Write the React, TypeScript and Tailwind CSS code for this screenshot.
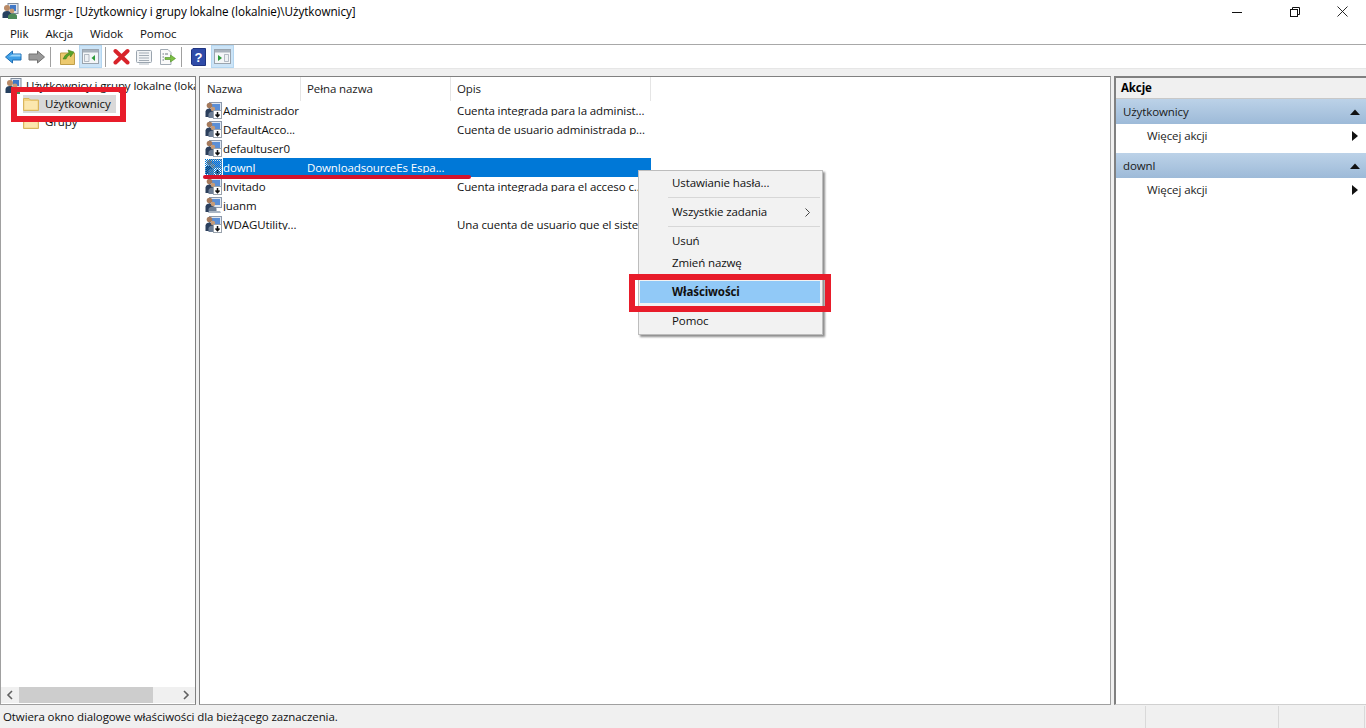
import React from "react";

const font = { fontFamily: '"Open Sans","Noto Sans",sans-serif' };

function UserIcon({ arrow = true, selected = false }: { arrow?: boolean; selected?: boolean }) {
  return (
    <svg width="17" height="17" viewBox="0 0 17 17" className="shrink-0">
      <defs>
        <pattern id="dith" width="2" height="2" patternUnits="userSpaceOnUse">
          <rect width="1" height="1" fill="#0078d7" />
          <rect x="1" y="1" width="1" height="1" fill="#0078d7" />
        </pattern>
      </defs>
      <rect x="4.5" y="0.5" width="12" height="10" fill="#dfe6f0" stroke="#8c99ab" />
      <rect x="7" y="2" width="8" height="6" fill="#5b8fd6" />
      <circle cx="4.5" cy="3.5" r="2.8" fill="#a57a5c" />
      <path d="M0.5 15 V9.5 Q1 6.5 4.5 6.5 Q8 6.5 8.5 9.5 V15 Z" fill="#2b3f5c" />
      <circle cx="8" cy="7" r="2.2" fill="#c79b76" />
      <path d="M3.5 16 V12 Q4.5 9.5 8 9.5 Q11.5 9.5 11.5 12 V16 Z" fill="#6e7f96" />
      {arrow ? (
        <>
          <rect x="8.5" y="8.5" width="8" height="8" fill="#fff" stroke="#9aa3ad" />
          <path d="M12.5 10 V14.5 M10.5 12.5 L12.5 14.7 L14.5 12.5" stroke="#111" strokeWidth="1.5" fill="none" />
        </>
      ) : (
        <path d="M4 14 H15 L16 16 H4 Z" fill="#a9b5c4" />
      )}
      {selected && <rect width="17" height="17" fill="url(#dith)" />}
    </svg>
  );
}

function AppIcon() {
  return (
    <svg width="17" height="17" viewBox="0 0 17 17" className="shrink-0">
      <rect x="6" y="0.5" width="10" height="10" fill="#dfe6f0" stroke="#7f8c9d" />
      <rect x="8" y="2" width="6" height="6" fill="#3f78c8" />
      <circle cx="5" cy="5" r="3" fill="#b98a66" />
      <path d="M0.5 15 V11 Q1 8 5 8 Q9 8 9.5 11 V15 Z" fill="#26405f" />
      <circle cx="10" cy="8" r="2.4" fill="#c79b76" />
      <path d="M6 16 V13 Q7 10.5 10.5 10.5 Q15 10.5 15 13 V16 Z" fill="#4d8a58" />
    </svg>
  );
}

function Folder() {
  return (
    <svg width="16" height="14" viewBox="0 0 16 14" className="shrink-0">
      <path d="M0.5 1.5 H6 L7.5 3 H15.5 V13.5 H0.5 Z" fill="#f3d27e" stroke="#d8b55e" />
      <rect x="1.5" y="4" width="13" height="8.5" fill="#fbe7ae" />
    </svg>
  );
}

function TitleIcons() {
  return (
    <div className="flex items-center">
      <div className="w-[46px] flex justify-center">
        <svg width="10" height="10" viewBox="0 0 10 10"><path d="M0 5.5 H10" stroke="#111" /></svg>
      </div>
      <div className="w-[46px] ml-[12px] flex justify-center">
        <svg width="10" height="10" viewBox="0 0 10 10" fill="none" stroke="#111"><rect x="0.5" y="2.5" width="7" height="7" /><path d="M2.5 2.5 V0.5 H9.5 V7.5 H7.5" /></svg>
      </div>
      <div className="w-[46px] ml-[1px] mr-[1px] flex justify-center">
        <svg width="11" height="11" viewBox="0 0 11 11" stroke="#111" strokeWidth="0.9"><path d="M0.5 0.5 L10.5 10.5 M10.5 0.5 L0.5 10.5" /></svg>
      </div>
    </div>
  );
}

function Sep() {
  return <div className="w-px h-[20px] bg-[#a0a0a0]" />;
}

function Toolbar() {
  return (
    <div className="h-[23px] flex items-center bg-white">
      <div className="ml-[5px] w-[17px] flex">
        <svg width="17" height="14" viewBox="0 0 17 14"><path d="M0.5 7 L7.5 1 V4 H16 V10 H7.5 V13 Z" fill="#3f9fe6" stroke="#1f6fb5" /><path d="M7.5 4.6 H15.5 V6.6 H4 Z" fill="#9bd6fa" /></svg>
      </div>
      <div className="ml-[6px] w-[17px] flex">
        <svg width="17" height="14" viewBox="0 0 17 14"><path d="M16.5 7 L9.5 1 V4 H1 V10 H9.5 V13 Z" fill="#9a9a9a" stroke="#727272" /></svg>
      </div>
      <div className="ml-[5px]"><Sep /></div>
      <div className="ml-[9px] w-[15px]">
        <svg width="15" height="17" viewBox="0 0 15 17"><path d="M0.5 5 H14.5 V16.5 H0.5 Z" fill="#ecc96e" stroke="#bf9e49" /><path d="M3 11 Q5 6 9 5 L8 2 L14 4 L10.5 9 L10 6.5 Q7 8 6 11 Z" fill="#58a32a" stroke="#3d7a1a" strokeWidth="0.5" /></svg>
      </div>
      <div className="ml-[4px] w-[23px] h-[23px] bg-[#cce4f7] border border-[#b4d6f0] flex items-center justify-center">
        <svg width="17" height="15" viewBox="0 0 17 15"><rect x="0.5" y="0.5" width="16" height="14" fill="#f4f6f8" stroke="#9aa4ae" /><rect x="1" y="1" width="15" height="2.5" fill="#a8b2bc" /><path d="M2.5 5.5 H7 V12.5 H2.5 Z" fill="#eef1f4" stroke="#8a96a3" strokeWidth="0.6" /><path d="M13 6 L9.5 9 L13 12 Z" fill="#2d9b3a" /></svg>
      </div>
      <div className="ml-[3px]"><Sep /></div>
      <div className="ml-[7px] w-[17px]">
        <svg width="17" height="17" viewBox="0 0 17 17"><path d="M2.5 3 L14.5 14.5 M14.5 3 L2.5 14.5" stroke="#d8232a" strokeWidth="4" strokeLinecap="round" /></svg>
      </div>
      <div className="ml-[6px] w-[16px]">
        <svg width="16" height="16" viewBox="0 0 16 16" fill="none"><rect x="0.5" y="1.5" width="15" height="12" rx="1" fill="#f2f4f6" stroke="#9aa4ae" /><path d="M3 4 H13 M3 6.5 H13 M3 9 H13 M3 11.5 H13" stroke="#a3acb5" /><path d="M3 15 H13" stroke="#b4bcc4" /></svg>
      </div>
      <div className="ml-[7px] w-[17px]">
        <svg width="17" height="16" viewBox="0 0 17 16" fill="none"><path d="M1.5 0.5 H9 L12 3.5 V15.5 H1.5 Z" fill="#fafafa" stroke="#a3acb5" /><path d="M3.5 5 H5 M3.5 8 H5 M3.5 11 H5 M6 5 H9" stroke="#6d7680" /><path d="M6 8.5 H11.5 V6 L16.5 9.5 L11.5 13 V10.5 H6 Z" fill="#7cc043" stroke="#4e8f23" strokeWidth="0.6" /></svg>
      </div>
      <div className="ml-[5px]"><Sep /></div>
      <div className="ml-[9px] w-[15px]">
        <svg width="15" height="18" viewBox="0 0 15 18"><path d="M2 0.5 H14.5 V17.5 H2 L0.5 16 V2 Z" fill="#2f4ba8" stroke="#1f3380" /><text x="7.5" y="13.5" textAnchor="middle" fontSize="13" fontWeight="700" fill="#fff" fontFamily="Liberation Sans, sans-serif">?</text></svg>
      </div>
      <div className="ml-[5px] w-[23px] h-[23px] bg-[#cce4f7] border border-[#b4d6f0] flex items-center justify-center">
        <svg width="17" height="15" viewBox="0 0 17 15"><rect x="0.5" y="0.5" width="16" height="14" fill="#f4f6f8" stroke="#9aa4ae" /><rect x="1" y="1" width="15" height="2.5" fill="#a8b2bc" /><path d="M10.5 5.5 H14.5 V12.5 H10.5 Z" fill="#eef1f4" stroke="#8a96a3" strokeWidth="0.6" /><path d="M4 6 L8 9 L4 12 Z" fill="#2d9b3a" /></svg>
      </div>
    </div>
  );
}

const rows: { n: string; f?: string; o?: string; sel?: boolean; arrow?: boolean }[] = [
  { n: "Administrador", o: "Cuenta integrada para la administ..." },
  { n: "DefaultAcco...", o: "Cuenta de usuario administrada p..." },
  { n: "defaultuser0" },
  { n: "downl", f: "DownloadsourceEs Espa...", sel: true },
  { n: "Invitado", o: "Cuenta integrada para el acceso c..." },
  { n: "juanm", arrow: false },
  { n: "WDAGUtility...", o: "Una cuenta de usuario que el siste..." },
];

function ListPane() {
  return (
    <div className="relative flex-1 ml-[3px] mr-[3px] bg-white border border-[#a0a0a0] border-t-[#808080] border-l-[#808080] overflow-hidden">
      <div className="flex h-[24px] w-[451px] text-[#222] items-center">
        <div className="w-[101px] h-full pl-[7px] flex items-center border-r border-[#e5e5e5]">Nazwa</div>
        <div className="w-[150px] h-full pl-[6px] flex items-center border-r border-[#e5e5e5]">Pełna nazwa</div>
        <div className="w-[200px] h-full pl-[6px] flex items-center border-r border-[#e5e5e5]">Opis</div>
      </div>
      <div className="w-[451px]">
        {rows.map((r) => (
          <div key={r.n} className="flex h-[19px] items-center">
            <div className="w-[23px] pl-[5px] shrink-0 flex"><UserIcon arrow={r.arrow !== false} selected={r.sel} /></div>
            <div className={r.sel ? "flex flex-1 h-full items-center bg-[#0078d7] text-white" : "flex flex-1 h-full items-center text-[#111]"}>
              <div className="w-[84px] shrink-0 whitespace-nowrap overflow-hidden">{r.n}</div>
              <div className="w-[150px] shrink-0 whitespace-nowrap overflow-hidden">{r.f ?? ""}</div>
              <div className="w-[194px] shrink-0 whitespace-nowrap overflow-hidden">{r.o ?? ""}</div>
            </div>
          </div>
        ))}
      </div>
    </div>
  );
}

function TreePane() {
  return (
    <div className="w-[196px] shrink-0 flex flex-col bg-white border border-[#a0a0a0] border-t-[#808080] border-r-[#808080] overflow-hidden">
      <div className="flex-1 text-[#111]">
        <div className="h-[18px] flex items-center pl-[4px] gap-[4px] whitespace-nowrap">
          <AppIcon />
          <span>Użytkownicy i grupy lokalne (lokalnie)</span>
        </div>
        <div className="flex items-center h-[18px] ml-[22px]">
          <div className="flex items-center h-[18px] w-[93px] bg-[#d9d9d9]">
            <Folder />
            <span className="ml-[6px]">Użytkownicy</span>
          </div>
        </div>
        <div className="flex items-center h-[18px] ml-[22px]">
          <Folder />
          <span className="ml-[6px]">Grupy</span>
        </div>
      </div>
      <div className="h-[16px] mb-[1px] bg-[#f0f0f0] flex items-center">
        <div className="w-[18px] flex justify-center">
          <svg width="8" height="10" viewBox="0 0 8 10" fill="none" stroke="#606060" strokeWidth="1.6"><path d="M6 1 L2 5 L6 9" /></svg>
        </div>
        <div className="w-[134px] h-full bg-[#cdcdcd]" />
        <div className="flex-1 flex justify-end pr-[5px]">
          <svg width="8" height="10" viewBox="0 0 8 10" fill="none" stroke="#606060" strokeWidth="1.6"><path d="M2 1 L6 5 L2 9" /></svg>
        </div>
      </div>
    </div>
  );
}

function ActionGroup({ title }: { title: string }) {
  return (
    <div>
      <div className="h-[25px] bg-gradient-to-b from-[#bcd2e8] to-[#9dbad8] flex items-center pl-[7px] pr-[6px] justify-between text-[#1a1a1a]">
        <span>{title}</span>
        <svg width="10" height="6" viewBox="0 0 10 6"><path d="M0 6 L5 0.5 L10 6 Z" fill="#111" /></svg>
      </div>
      <div className="h-[29px] flex items-center pb-[5px] pl-[31px] pr-[8px] justify-between text-[#222]">
        <span>Więcej akcji</span>
        <svg width="6" height="10" viewBox="0 0 6 10"><path d="M0 0 L6 5 L0 10 Z" fill="#111" /></svg>
      </div>
    </div>
  );
}

function ActionPane() {
  return (
    <div className="w-[252px] shrink-0 bg-white border-l-2 border-l-[#808080] border-t-2 border-t-[#808080] border-b border-b-[#d0d0d0]">
      <div className="h-[21px] bg-[#f0f0f0] flex items-center pl-[5px] font-bold text-black border-b border-[#c8c8c8]">Akcje</div>
      <ActionGroup title="Użytkownicy" />
      <ActionGroup title="downl" />
    </div>
  );
}

function ContextMenu() {
  const Line = () => <div className="h-px bg-[#d7d7d7] ml-[28px] mr-[1px] my-[3px]" />;
  return (
    <div className="absolute left-[638px] top-[170px] w-[185px] h-[165px] bg-[#f2f2f2] border border-[#bdbdbd] shadow-[2px_2px_2px_rgba(0,0,0,0.45)] text-[#111] p-[1px]">
      <div className="h-[22px] flex items-center pl-[32px]">Ustawianie hasła...</div>
      <Line />
      <div className="h-[22px] flex items-center pl-[32px] pr-[11px] justify-between">
        <span>Wszystkie zadania</span>
        <svg width="5" height="9" viewBox="0 0 5 9" fill="none" stroke="#444"><path d="M0.5 0.5 L4.5 4.5 L0.5 8.5" /></svg>
      </div>
      <Line />
      <div className="h-[22px] flex items-center pl-[32px]">Usuń</div>
      <div className="h-[22px] flex items-center pl-[32px]">Zmień nazwę</div>
      <div className="h-[22px] mt-[7px] mr-[1px] flex items-center pl-[32px] bg-[#91c9f7] font-bold">Właściwości</div>
      <div className="h-[22px] mt-[7px] flex items-center pl-[32px]">Pomoc</div>
    </div>
  );
}

export default function App() {
  return (
    <div className="relative w-[1366px] h-[728px] flex flex-col bg-white overflow-hidden text-[11.5px] tracking-[-0.1px] leading-none" style={font}>
      <div className="h-[23px] flex items-center justify-between shrink-0">
        <div className="flex items-center text-black">
          <div className="ml-[2px]"><AppIcon /></div>
          <span className="ml-[5px] text-[11.7px] tracking-[-0.05px]">lusrmgr - [Użytkownicy i grupy lokalne (lokalnie)\Użytkownicy]</span>
        </div>
        <TitleIcons />
      </div>
      <div className="h-[22px] flex items-center shrink-0 pl-[10px] gap-[17px] text-[#111] border-b border-[#a8a8a8]">
        <span>Plik</span>
        <span>Akcja</span>
        <span>Widok</span>
        <span>Pomoc</span>
      </div>
      <div className="shrink-0"><Toolbar /></div>
      <div className="h-[8px] shrink-0 bg-[#f0f0f0] border-t border-[#e6e6e6]" />
      <div className="flex-1 flex min-h-0 bg-[#f0f0f0] pb-[1px]">
        <TreePane />
        <ListPane />
        <ActionPane />
      </div>
      <div className="h-[22px] shrink-0 bg-[#f0f0f0] flex items-center text-[#111]">
        <div className="w-[1145px] pl-[3px] h-full flex items-center">Otwiera okno dialogowe właściwości dla bieżącego zaznaczenia.</div>
        <div className="w-[133px] h-full border-l border-[#d9d9d9]" />
        <div className="w-[87px] h-full border-l border-r border-[#d9d9d9]" />
      </div>

      <ContextMenu />

      <div className="absolute left-[11px] top-[87px] w-[115px] h-[35px] border-[6px] border-t-[5px] border-[#e81c2a]" />
      <div className="absolute left-[629px] top-[274px] w-[202px] h-[38px] border-[6px] border-[#e81c2a]" />
      <div className="absolute left-[203px] top-[175px] w-[268px] h-[4px] rounded-full bg-[#d3132c]" />
    </div>
  );
}
